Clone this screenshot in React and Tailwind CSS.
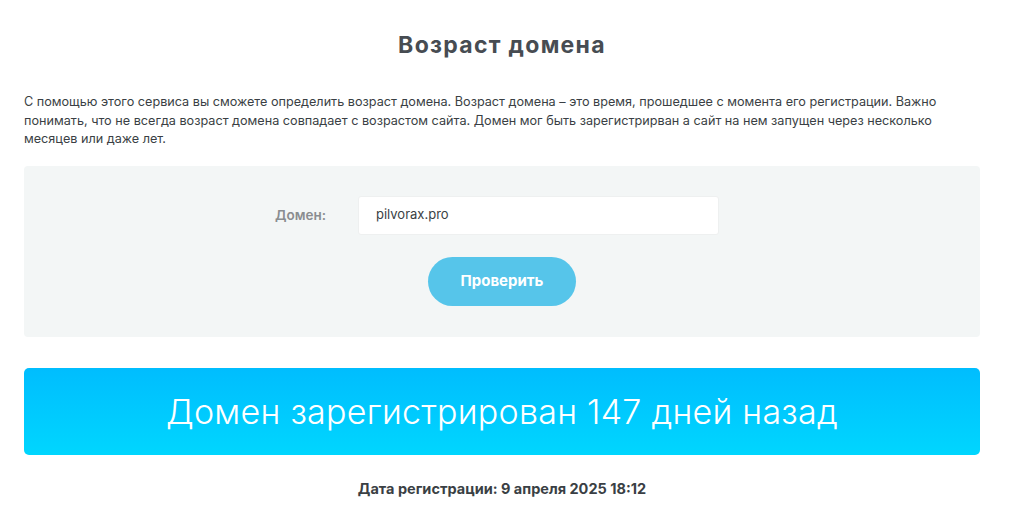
export default function App() {
  return (
    <div className="w-[1025px] h-[509px] bg-white overflow-hidden font-['Inter',sans-serif]">
      <div className="mx-[24px] w-[956px]">
        <h1 className="pt-[30px] h-[62px] text-center text-[23px] leading-[30px] tracking-[1.3px] font-bold text-[#474c52]">Возраст домена</h1>
        <p className="mt-[31px] text-[12.65px] leading-[18.5px] text-[#3a3f44]">
          С помощью этого сервиса вы сможете определить возраст домена. Возраст домена – это время, прошедшее с момента его регистрации. Важно понимать, что не всегда возраст домена совпадает с возрастом сайта. Домен мог быть зарегистрирван а сайт на нем запущен через несколько месяцев или даже лет.
        </p>
        <div className="mt-[17px] h-[171px] rounded-[4px] bg-[#f3f6f6] flex flex-col pt-[30px]">
          <div className="flex items-center pl-[251px]">
            <label className="w-[83px] text-[13.5px] font-semibold text-[#8a8d90]">Домен:</label>
            <div className="w-[361px] h-[39px] bg-white rounded-[3px] border border-[#eef0f0] flex items-center pl-[17px] text-[13px] text-[#3a3f44]">pilvorax.pro</div>
          </div>
          <button className="mt-[22px] self-center w-[148px] h-[49px] rounded-full bg-[#56c5ea] text-white text-[15px] font-bold">Проверить</button>
        </div>
        <div className="mt-[31px] h-[87px] rounded-[5px] bg-gradient-to-b from-[#00bdfe] to-[#00d6fe] flex items-center justify-center text-white text-[34px] tracking-[0.25px] font-light">
          Домен зарегистрирован 147 дней назад
        </div>
        <div className="mt-[23px] text-center text-[14.5px] font-bold text-[#3a3f44]">Дата регистрации: 9 апреля 2025 18:12</div>
      </div>
    </div>
  );
}
